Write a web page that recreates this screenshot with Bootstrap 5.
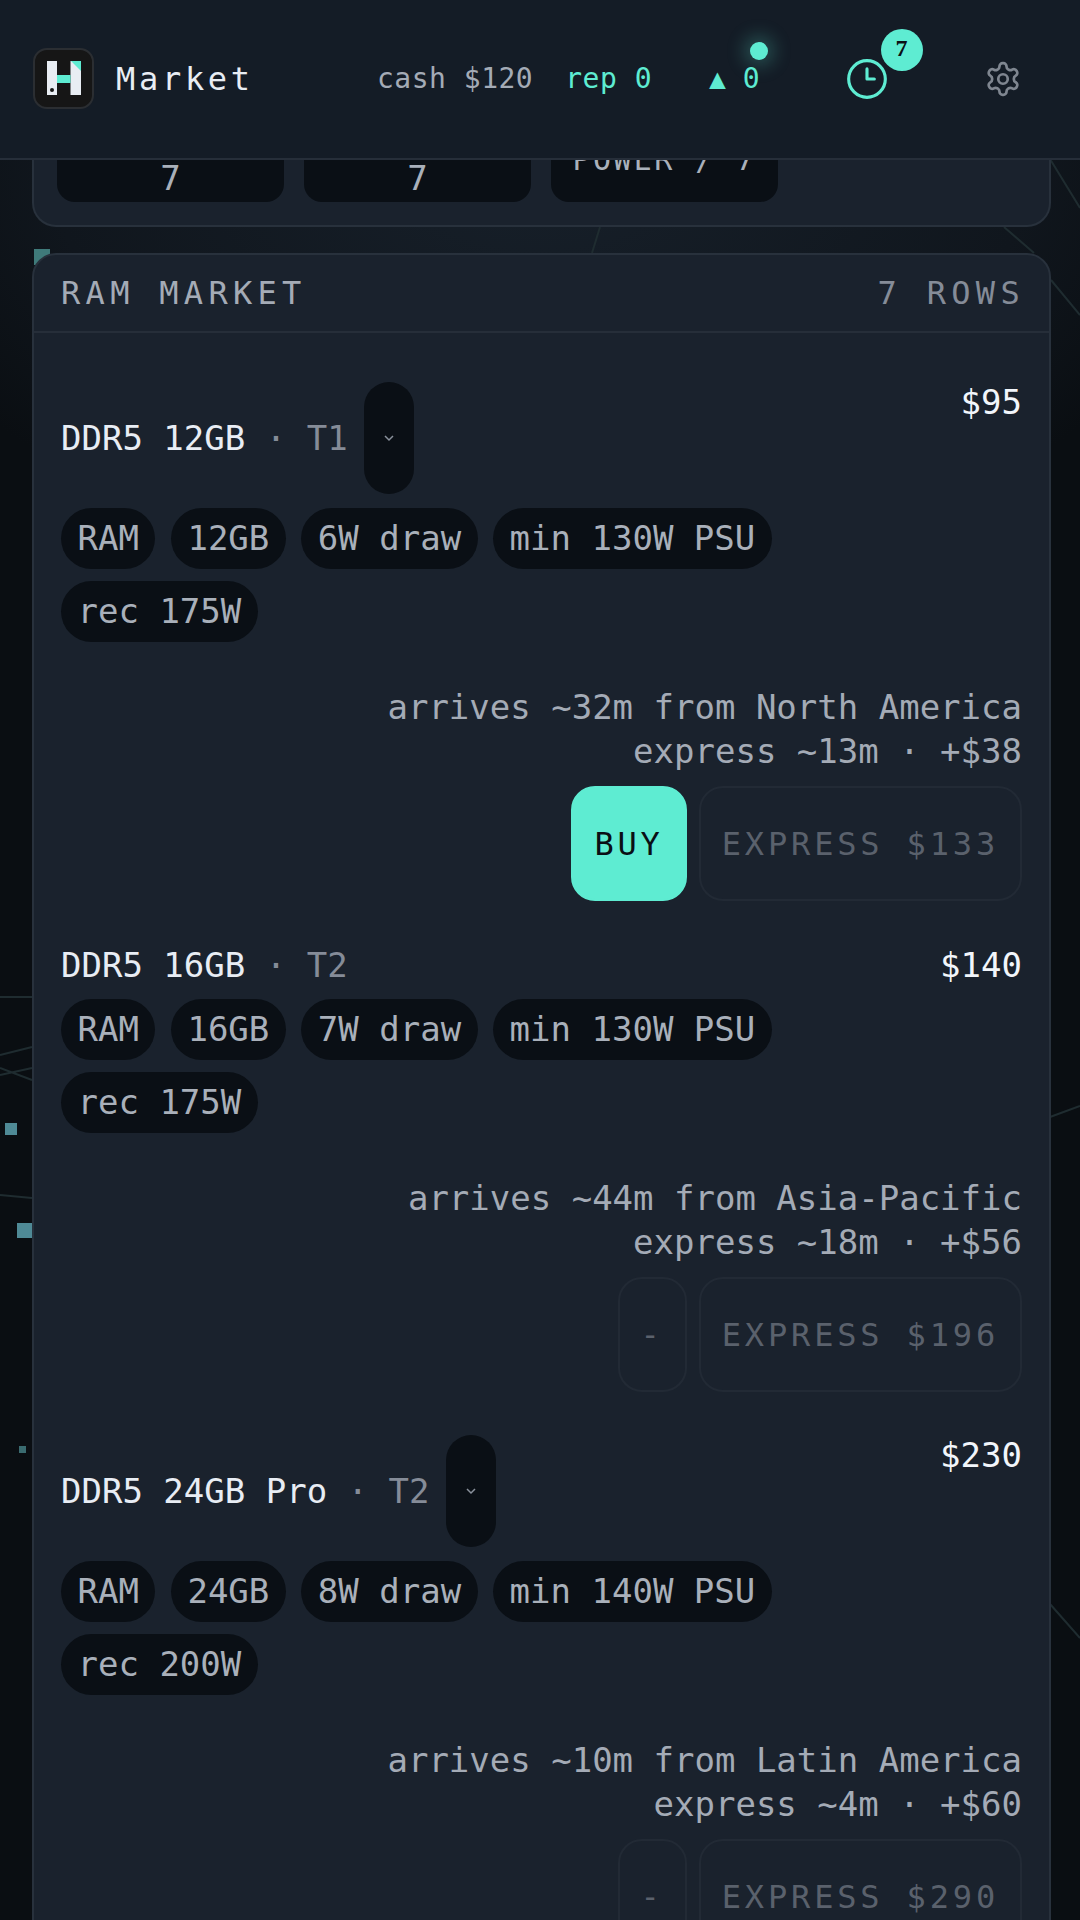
<!DOCTYPE html>
<html lang="en">
<head>
  <meta charset="UTF-8">
  <title>Market</title>
  <meta name="viewport" content="width=device-width, initial-scale=1">
  <link href="https://cdn.jsdelivr.net/npm/bootstrap@5.3.3/dist/css/bootstrap.min.css" rel="stylesheet">
  <style>
    html, body { height: 1920px; overflow: hidden; }
    body {
      position: relative;
      background: radial-gradient(ellipse 700px 420px at 50% 160px, #17202a 0%, #10161d 70%, #0a0e12 100%), #0a0e12;
      background-color: #0a0e12;
      font-family: "DejaVu Sans Mono", "Liberation Mono", monospace;
      font-size: 34px;
      color: #e8edf4;
    }
    .bg-lines { position: absolute; top: 0; left: 0; }
    .page-wrap { position: relative; }

    .top-bar { position: relative; z-index: 2; height: 160px; background: #141c26; border-bottom: 2px solid #262e39; padding-left: 33px; }
    .logo-box { width: 61px; height: 61px; margin-top: -2px; background: #161616; border: 2px solid #2b2e32; border-radius: 14px; }
    .brand-name { font-size: 32px; letter-spacing: 3.7px; margin-left: 22px; width: 261px; }
    .stat-text { font-size: 28px; line-height: 36px; letter-spacing: .5px; color: #a4abb6; }
    .stat-teal { color: #5eecd2; }
    .stat-rep { margin-left: 32px; }
    .stat-tri { margin-left: 57px; position: relative; letter-spacing: 0; }
    .live-dot { position: absolute; top: -19px; right: -8px; width: 18px; height: 18px; border-radius: 50%; background: #5eecd2; box-shadow: 0 0 18px 6px rgba(94,236,210,.25); }
    .clock-btn { position: relative; margin-left: 85px; width: 44px; height: 44px; }
    .count-dot { position: absolute; top: -28px; left: 36px; width: 42px; height: 42px; border-radius: 50%; background: #5eecd2; color: #0a0f15; font: bold 24px/38px "Liberation Serif", serif; text-align: center; }
    .gear-btn { margin-left: 95px; width: 38px; height: 38px; }
    .top-bar svg { display: block; }

    .panel { background: #1a222d; border: 2px solid #28313c; border-radius: 24px; margin: 0 29px 0 32px; }
    .panel-stub { border-top: 0; border-radius: 0 0 24px 24px; padding: 0 23px 24px; height: 67px; margin-bottom: 26px; }
    .stub-tile { width: 227px; height: 42px; background: #0a0f15; border-radius: 0 0 18px 18px; text-align: center; font-size: 34px; line-height: 36px; color: #a9b0ba; }
    .stub-clip { overflow: hidden; }
    .stub-tile-off { margin-top: -18px; height: 58px; font-size: 30px; letter-spacing: 2.4px; }
    .stub-gap { gap: 20px; }

    .panel-head { height: 78px; padding: 0 27px; border-bottom: 2px solid #262e39; font-size: 32px; letter-spacing: 5.3px; color: #a4abb6; }
    .panel-head span:last-child { color: #858c98; margin-right: -3px; }
    .panel-body { padding: 49px 27px 0; }
    .market-row { padding-bottom: 44px; }
    .market-row:nth-child(2) { padding-bottom: 43px; }
    .row-title { line-height: 40px; gap: 16px; }
    .row-title .tier { color: #858c98; }
    .row-title .sep { color: #858c98; }
    .row-price { line-height: 40px; color: #f2f6fb; }
    .more-btn { width: 50px; height: 112px; border-radius: 25px; background: #0a0f15; border: 0; padding: 0; }
    .chip-list { gap: 12px 15.5px; margin-top: 14px; width: 770px; }
    .spec-chip { height: 61px; line-height: 61px; padding: 0 16.5px; border-radius: 31px; background: #0a0f15; color: #a9b0ba; }
    .row-eta { margin-top: 43px; line-height: 44px; color: #a4abb6; text-align: right; }
    .row-actions { gap: 12px; margin-top: 13px; }
    .buy-btn {
      height: 115px; padding: 0 21px; border-radius: 24px; border: 2px solid #222a35; background: transparent;
      color: #5a616c; font-size: 32px; letter-spacing: 3.84px;
    }
    .buy-on { background: #5eecd2; border-color: #5eecd2; color: #0a0f15; }
  </style>
</head>
<body>

<!-- background circuit lines -->
<svg class="bg-lines" width="1080" height="1920" fill="none" stroke="#1f2c30" stroke-width="2">
  <path d="M0 997H32M0 1055L32 1047M0 1075L32 1068M0 1068L32 1080M0 1195L32 1198"/>
  <path d="M1050 159L1080 208M1004 227L1034 253M600 227L592 253M1051 280L1080 315M1050 1117L1080 1106M1050 1604L1080 1638"/>
  <g stroke="none">
    <rect x="34" y="249" width="16" height="16" fill="#3f7a7a"/>
    <rect x="5" y="1123" width="12" height="12" fill="#4f8a96"/>
    <rect x="17" y="1223" width="16" height="15" fill="#4f8a96"/>
    <rect x="19" y="1446" width="7" height="7" fill="#3a6b70"/>
  </g>
</svg>

<div class="page-wrap">
  <!-- top bar -->
  <header class="top-bar d-flex align-items-center">
    <div class="logo-box d-flex align-items-center justify-content-center flex-shrink-0">
      <svg width="34" height="34" viewBox="0 0 34 34">
        <rect x="0" y="0" width="10" height="34" fill="#e8edf3"/>
        <rect x="23.5" y="0" width="10.5" height="34" fill="#e8edf3"/>
        <rect x="10" y="14" width="13.5" height="8" fill="#5eecd2"/>
        <path d="M24 0H34V10z" fill="#5eecd2"/>
        <circle cx="5" cy="29" r="2" fill="#161616"/>
      </svg>
    </div>
    <div class="brand-name">Market</div>
    <div class="stat-text">cash $120</div>
    <div class="stat-text stat-teal stat-rep">rep 0</div>
    <div class="stat-text stat-teal stat-tri">▲ 0<span class="live-dot"></span></div>
    <div class="clock-btn">
      <svg width="44" height="44" viewBox="0 0 24 24" fill="none" stroke="#5eecd2" stroke-width="1.7" stroke-linecap="round" stroke-linejoin="round">
        <circle cx="12" cy="12" r="10"/><path d="M12 6.5V12H16"/>
      </svg>
      <span class="count-dot">7</span>
    </div>
    <div class="gear-btn">
      <svg width="38" height="38" viewBox="0 0 24 24" fill="none" stroke="#7f8690" stroke-width="1.7" stroke-linecap="round" stroke-linejoin="round">
        <path d="M12.22 2h-.44a2 2 0 0 0-2 2v.18a2 2 0 0 1-1 1.73l-.43.25a2 2 0 0 1-2 0l-.15-.08a2 2 0 0 0-2.73.73l-.22.38a2 2 0 0 0 .73 2.73l.15.1a2 2 0 0 1 1 1.72v.51a2 2 0 0 1-1 1.74l-.15.09a2 2 0 0 0-.73 2.73l.22.38a2 2 0 0 0 2.73.73l.15-.08a2 2 0 0 1 2 0l.43.25a2 2 0 0 1 1 1.73V20a2 2 0 0 0 2 2h.44a2 2 0 0 0 2-2v-.18a2 2 0 0 1 1-1.73l.43-.25a2 2 0 0 1 2 0l.15.08a2 2 0 0 0 2.73-.73l.22-.39a2 2 0 0 0-.73-2.73l-.15-.08a2 2 0 0 1-1-1.74v-.5a2 2 0 0 1 1-1.74l.15-.09a2 2 0 0 0 .73-2.73l-.22-.38a2 2 0 0 0-2.73-.73l-.15.08a2 2 0 0 1-2 0l-.43-.25a2 2 0 0 1-1-1.73V4a2 2 0 0 0-2-2z"/>
        <circle cx="12" cy="12" r="3"/>
      </svg>
    </div>
  </header>

  <!-- panel above, scrolled mostly out of view -->
  <section class="panel panel-stub d-flex stub-gap">
    <div class="stub-tile">7</div>
    <div class="stub-tile">7</div>
    <div class="stub-tile stub-clip"><div class="stub-tile-off">POWER / 7</div></div>
  </section>

  <!-- ram market -->
  <section class="panel">
    <div class="panel-head d-flex justify-content-between align-items-center">
      <span>RAM MARKET</span>
      <span>7 ROWS</span>
    </div>
    <div class="panel-body" id="marketRows"></div>
  </section>
</div>

<script src="https://cdn.jsdelivr.net/npm/bootstrap@5.3.3/dist/js/bootstrap.bundle.min.js"></script>
<script>
  const rows = [
    { name: "DDR5 12GB", tier: "T1", more: true, price: 95, chips: ["RAM", "12GB", "6W draw", "min 130W PSU", "rec 175W"],
      eta: "arrives ~32m from North America", express: "express ~13m · +$38", buy: "BUY", expressBtn: "EXPRESS $133" },
    { name: "DDR5 16GB", tier: "T2", more: false, price: 140, chips: ["RAM", "16GB", "7W draw", "min 130W PSU", "rec 175W"],
      eta: "arrives ~44m from Asia-Pacific", express: "express ~18m · +$56", buy: "-", expressBtn: "EXPRESS $196" },
    { name: "DDR5 24GB Pro", tier: "T2", more: true, price: 230, chips: ["RAM", "24GB", "8W draw", "min 140W PSU", "rec 200W"],
      eta: "arrives ~10m from Latin America", express: "express ~4m · +$60", buy: "-", expressBtn: "EXPRESS $290" }
  ];

  const chevron = `<svg width="12" height="8" viewBox="0 0 12 8" fill="none" stroke="#8a919c" stroke-width="1.5"><path d="M2 2l4 4 4-4"/></svg>`;

  document.getElementById("marketRows").innerHTML = rows.map(r => `
    <div class="market-row">
      <div class="d-flex justify-content-between align-items-start">
        <div class="row-title d-flex align-items-center">
          <span>${r.name} <span class="sep">·</span> <span class="tier">${r.tier}</span></span>
          ${r.more ? `<button class="more-btn d-flex align-items-center justify-content-center" type="button">${chevron}</button>` : ""}
        </div>
        <div class="row-price">$${r.price}</div>
      </div>
      <div class="chip-list d-flex flex-wrap">
        ${r.chips.map(c => `<span class="spec-chip">${c}</span>`).join("")}
      </div>
      <div class="row-eta">${r.eta}<br>${r.express}</div>
      <div class="row-actions d-flex justify-content-end">
        <button class="buy-btn ${r.buy === "BUY" ? "buy-on" : ""}" type="button">${r.buy}</button>
        <button class="buy-btn" type="button">${r.expressBtn}</button>
      </div>
    </div>
  `).join("");
</script>
</body>
</html>
